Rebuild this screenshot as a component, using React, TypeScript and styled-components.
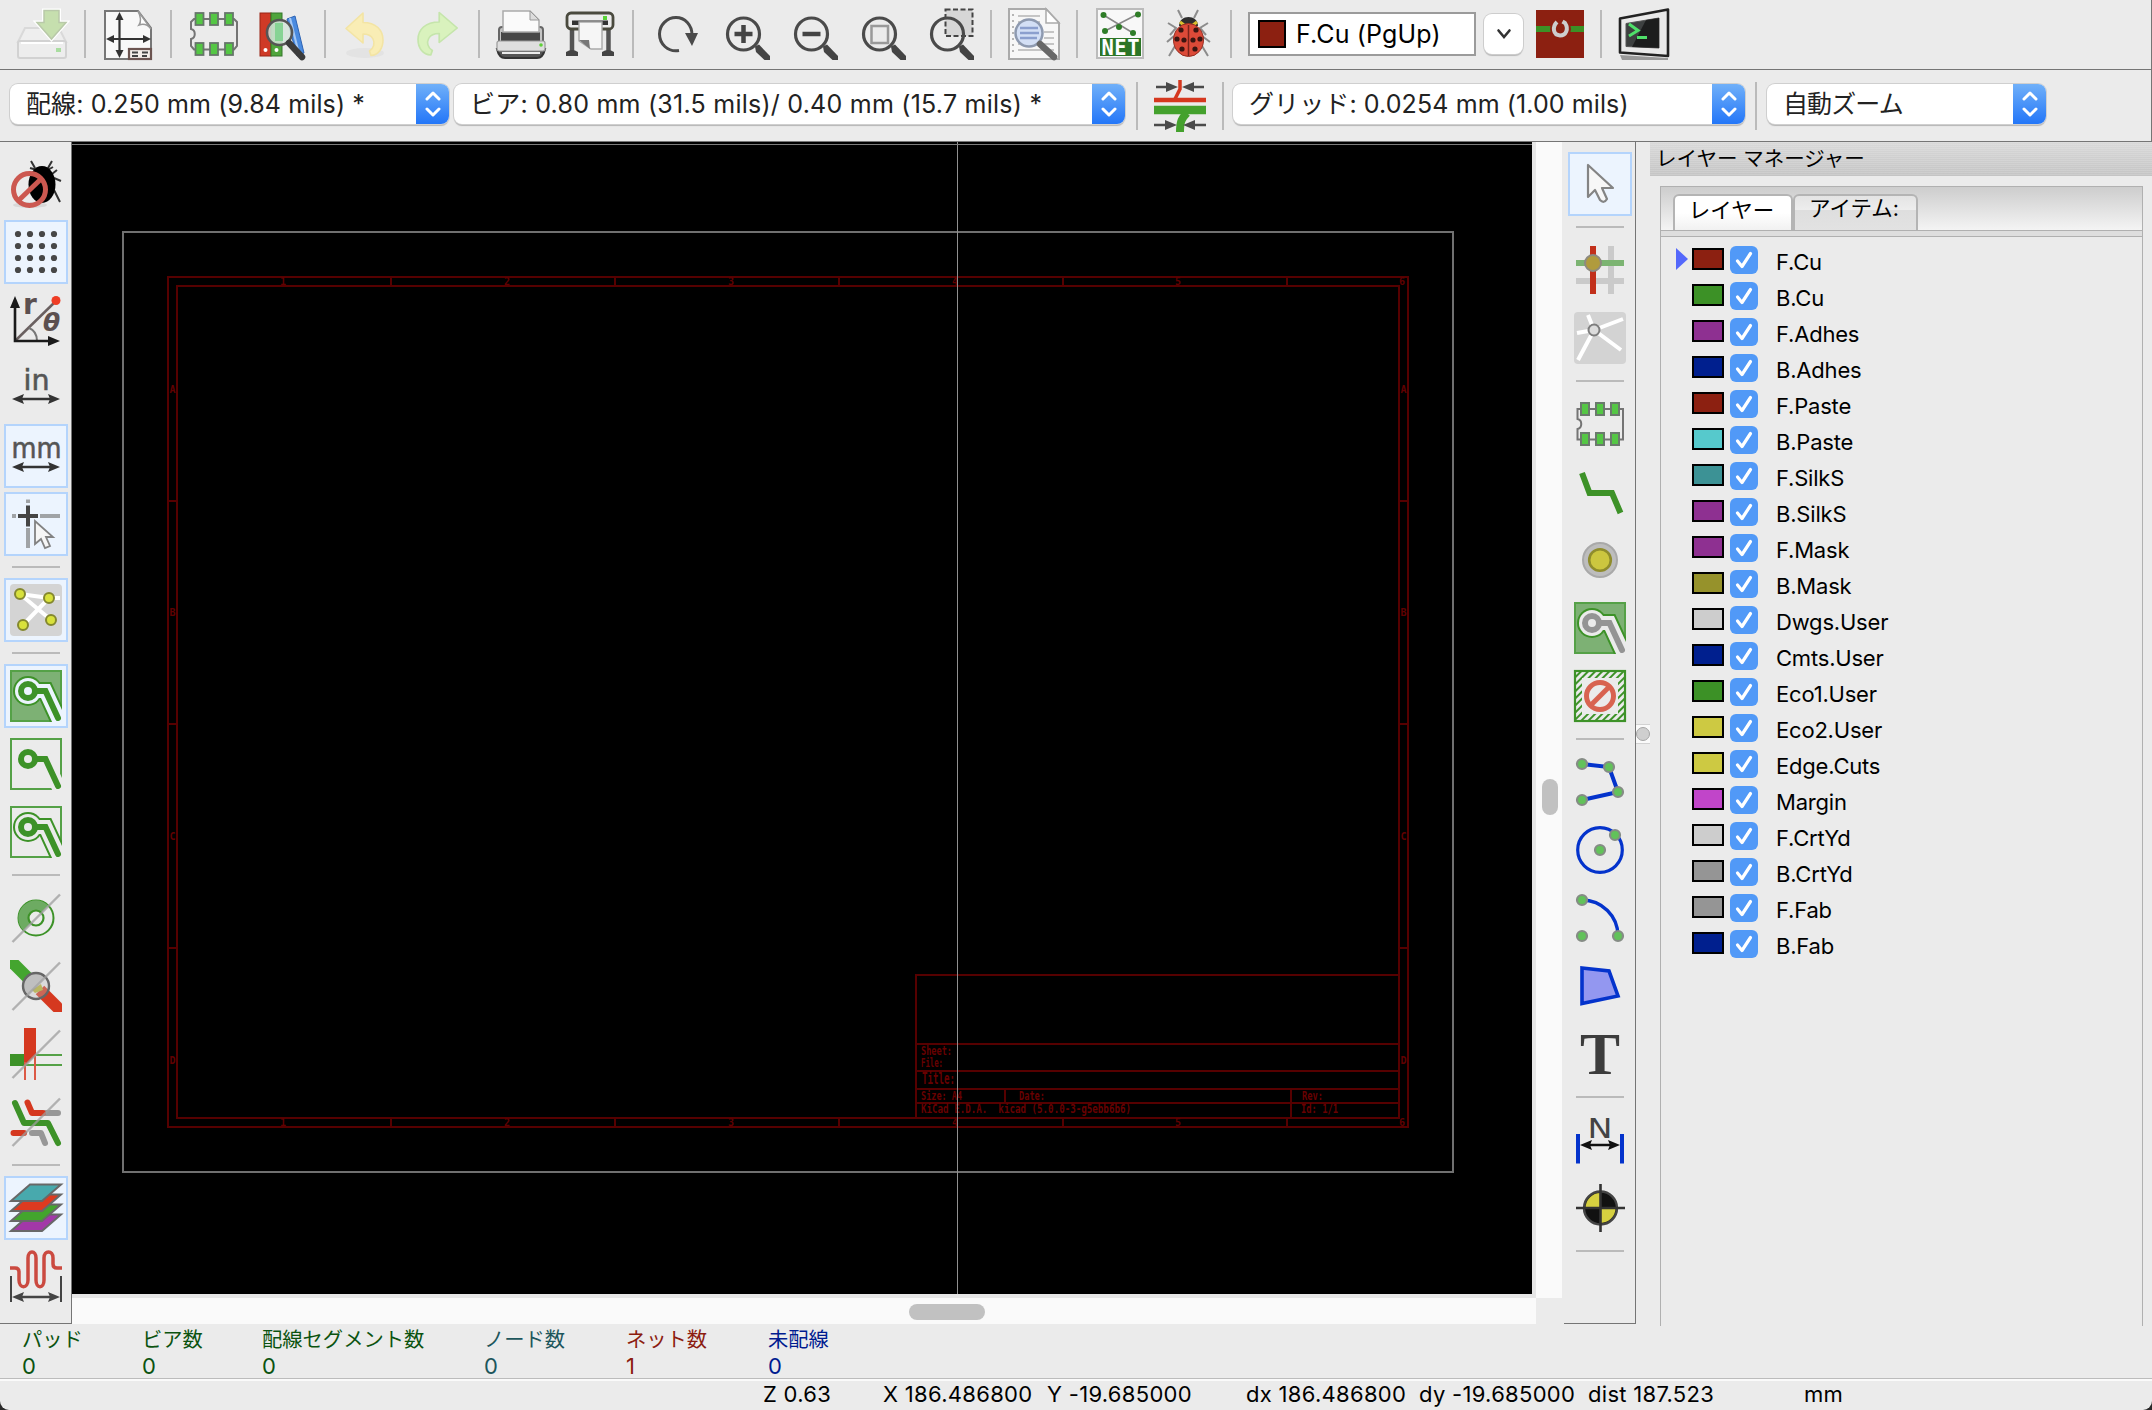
import React, { ReactNode } from "react";
import styled, { createGlobalStyle, css } from "styled-components";

const GlobalStyle = createGlobalStyle`
  html, body { margin: 0; padding: 0; background: #2a2a2a; overflow: hidden; }
  * { box-sizing: border-box; }
`;

const SANS = `Inter, "Noto Sans CJK JP", sans-serif`;
const GREEN = "#3d9228";
const RED = "#d5381f";
const DARK = "#4a4a4a";
const BLUE = "#0433cc";

/* ---------- layout ---------- */

const Window = styled.div`
  display: flex;
  flex-direction: column;
  width: 2152px;
  height: 1410px;
  background: #ebebeb;
  border-bottom-left-radius: 9px;
  border-bottom-right-radius: 9px;
  overflow: hidden;
  font-family: ${SANS};
  color: #000;
`;

const TopBar = styled.div<{ $height: number; $gap: number; $pad: number; $lift: number }>`
  display: flex;
  align-items: center;
  gap: ${(p) => p.$gap}px;
  height: ${(p) => p.$height}px;
  padding: 0 0 ${(p) => p.$lift}px ${(p) => p.$pad}px;
  border-bottom: 1px solid #757575;
  border-right: 1px solid #757575;
`;

const Group = styled.div<{ $gap: number; $left?: number }>`
  display: flex;
  align-items: center;
  gap: ${(p) => p.$gap}px;
  margin-left: ${(p) => p.$left ?? 0}px;
`;

const VRule = styled.div`
  width: 2px;
  height: 48px;
  flex: none;
  background: #bababa;
`;

const HRule = styled.div`
  width: 48px;
  height: 2px;
  flex: none;
  margin: 6px 0;
  background: #bababa;
`;

const Middle = styled.div`
  display: flex;
  height: 1182px;
`;

const SideBar = styled.div`
  display: flex;
  flex-direction: column;
  align-items: center;
  gap: 4px;
  width: 72px;
  padding-top: 10px;
  border-right: 1px solid #757575;
  border-bottom: 1px solid #757575;
  flex: none;
`;

const ToolButton = styled.div<{ $on?: boolean }>`
  display: flex;
  align-items: center;
  justify-content: center;
  width: 64px;
  height: 64px;
  flex: none;
  border: 2px solid transparent;
  ${(p) =>
    p.$on &&
    css`
      background: #ecf4fe;
      border-color: #b4d4fc;
    `}
`;

const Art = styled.svg<{ $clip?: boolean }>`
  display: block;
  width: 52px;
  height: 52px;
  flex: none;
  overflow: ${(p) => (p.$clip ? "hidden" : "visible")};
`;

/* ---------- controls ---------- */

const SelectBox = styled.div<{ $width: number }>`
  display: flex;
  width: ${(p) => p.$width}px;
  height: 40px;
  margin-bottom: 3px;
  flex: none;
  border-radius: 8px;
  background: #fff;
  overflow: hidden;
  box-shadow: 0 0 0 1px #cfcfcf, 0 2px 1px #b5b5b5;
`;

const SelectText = styled.span<{ $ls: number }>`
  flex: 1;
  padding-left: 16px;
  font-size: 25px;
  line-height: 40px;
  letter-spacing: ${(p) => p.$ls}px;
  color: #222;
  white-space: pre;
`;

const Stepper = styled.div`
  display: flex;
  align-items: center;
  justify-content: center;
  width: 33px;
  background: linear-gradient(#70b0f9, #2376f8);
`;

const ColorCombo = styled.div`
  display: flex;
  align-items: center;
  gap: 10px;
  width: 228px;
  height: 44px;
  padding-left: 8px;
  background: #fff;
  border: 2px solid #9b9b9b;
  font-size: 25px;
  letter-spacing: 0.15px;
  white-space: pre;
`;

const ComboSwatch = styled.div`
  width: 28px;
  height: 28px;
  border: 2px solid #000;
  background: #8c2011;
`;

const DropButton = styled.div`
  display: flex;
  align-items: center;
  justify-content: center;
  width: 39px;
  height: 40px;
  margin-bottom: 1px;
  background: #fff;
  border-radius: 8px;
  box-shadow: 0 0 0 1px #cdcdcd, 0 2px 1px #b8b8b8;
`;

const LayerPair = styled.svg`
  width: 48px;
  height: 48px;
  margin-left: 5px;
  background: #8c2011;
`;

/* ---------- canvas ---------- */

const Board = styled.div`
  display: grid;
  grid-template-columns: 1460px 4px 26px;
  grid-template-rows: 1152px 4px 26px;
  width: 1492px;
  flex: none;
`;

const Drawing = styled.svg`
  display: block;
  width: 1460px;
  height: 1152px;
  background: #000;
`;

const Gutter = styled.div`
  background: #e6e6e6;
`;

const VTrack = styled.div`
  display: flex;
  justify-content: center;
  grid-row: span 2;
  padding: 637px 0 0 2px;
  background: #fafafa;
`;

const HTrack = styled.div`
  grid-column: span 2;
  padding: 6px 0 0 837px;
  background: #fafafa;
`;

const HGutter = styled(Gutter)`
  grid-column: span 2;
`;

const Thumb = styled.div<{ $w: number; $h: number }>`
  width: ${(p) => p.$w}px;
  height: ${(p) => p.$h}px;
  border-radius: 8px;
  background: #c1c1c1;
`;

/* ---------- layer manager ---------- */

const Sash = styled.div`
  width: 14px;
  padding-top: 582px;
  flex: none;
`;

const SashGrip = styled.div`
  display: flex;
  align-items: center;
  justify-content: center;
  height: 20px;
  background: #fafafa;
  border: solid #d2d2d2;
  border-width: 1px 0;
  &::before {
    content: "";
    width: 12px;
    height: 12px;
    border-radius: 50%;
    background: #cfcfcf;
    border: 1px solid #a5a5a5;
  }
`;

const Panel = styled.div`
  display: flex;
  flex-direction: column;
  flex: 1;
`;

const PanelTitle = styled.div`
  height: 34px;
  flex: none;
  padding-left: 6px;
  background: repeating-linear-gradient(rgba(255, 255, 255, 0.14) 0 1px, transparent 1px 2px),
    linear-gradient(#d9d9d9, #c4c4c4);
  font-size: 20.5px;
  line-height: 33px;
  white-space: pre;
`;

const Notebook = styled.div`
  width: 483px;
  height: 1140px;
  flex: none;
  margin: 10px 0 0 10px;
  border: solid #b0b0b0;
  border-width: 1px 1px 0;
`;

const TabStrip = styled.div`
  display: flex;
  align-items: flex-end;
  height: 44px;
  padding-left: 12px;
  background: linear-gradient(#cdcdcd, #f4f4f4);
  border-bottom: 1px solid #b0b0b0;
`;

const Tab = styled.div<{ $active?: boolean; $width: number }>`
  width: ${(p) => p.$width}px;
  height: 36px;
  padding-right: 3px;
  text-align: center;
  border: 2px solid #b4b4b4;
  border-bottom: 0;
  border-radius: 6px 6px 0 0;
  font-size: 21.5px;
  line-height: ${(p) => (p.$active ? 28 : 24)}px;
  background: ${(p) =>
    p.$active
      ? "linear-gradient(#fff 50%, #f1f1f1)"
      : "linear-gradient(#e4e4e4, #ededed 40%, #dedede 42%, #e2e2e2)"};
`;

const StripEdge = styled.div`
  height: 6px;
  background: #dedede;
  border-bottom: 1px solid #b0b0b0;
`;

const LayerList = styled.div`
  padding: 9px 0 0 15px;
`;

const LayerRow = styled.div`
  display: flex;
  height: 36px;
`;

const Marker = styled.div<{ $on: boolean }>`
  width: 12px;
  height: 22px;
  margin: 2px 4px 0 0;
  background: ${(p) => (p.$on ? "#5468fb" : "transparent")};
  clip-path: polygon(0 0, 100% 50%, 0 100%);
`;

const Swatch = styled.div<{ $color: string }>`
  width: 32px;
  height: 22px;
  margin: 2px 6px 0 0;
  border: 2px solid #000;
  background: ${(p) => p.$color};
`;

const Check = styled.svg`
  width: 28px;
  height: 28px;
  border-radius: 6px;
  background: #5199f7;
`;

const LayerName = styled.span`
  margin-left: 18px;
  font-size: 22px;
  line-height: 32px;
  letter-spacing: -0.2px;
`;

/* ---------- bottom ---------- */

const InfoBar = styled.div`
  display: flex;
  height: 55px;
  padding-left: 22px;
  border-bottom: 1px solid #bcbcbc;
`;

const InfoCell = styled.div<{ $width: number; $color: string }>`
  display: flex;
  flex-direction: column;
  width: ${(p) => p.$width}px;
  color: ${(p) => p.$color};
  font-size: 20.3px;
  line-height: 28px;
  padding-top: 2px;
  white-space: nowrap;
`;

const InfoValue = styled.span`
  font-size: 22px;
  line-height: 25px;
`;

const StatusBar = styled.div`
  display: flex;
  height: 31px;
  padding-left: 763px;
  border-top: 2px solid #fafafa;
  font-size: 22px;
  line-height: 27px;
`;

const StatusCell = styled.span<{ $width: number }>`
  width: ${(p) => p.$width}px;
  flex: none;
  letter-spacing: 0.3px;
  white-space: nowrap;
`;

/* ---------- icon building blocks ---------- */

const Icon = ({ children, clip }: { children: ReactNode; clip?: boolean }) => (
  <Art viewBox="0 0 52 52" fill="none" $clip={clip}>
    {children}
  </Art>
);

const DoubleArrow = ({ x1, x2, y, color = "#333" }: { x1: number; x2: number; y: number; color?: string }) => (
  <g>
    <path d={`M${x1 + 6} ${y}H${x2 - 6}`} stroke={color} strokeWidth="2.5" />
    <path
      d={`M${x1} ${y}l12 -5l-2 5l2 5zM${x2} ${y}l-12 -5l2 5l-2 5z`}
      fill={color}
    />
  </g>
);

const Slash = () => <path d="M2.5 50L50 2.5" stroke="#9d9d9d" strokeOpacity=".75" strokeWidth="2.4" />;

const Node = ({ x, y }: { x: number; y: number }) => (
  <circle cx={x} cy={y} r="5" fill="#62c25a" stroke="#858c85" strokeWidth="2.2" />
);

const Lens = ({ children }: { children?: ReactNode }) => (
  <g>
    <path d="M37 38.5L41 36.5L52 48V52H46.500L38 44z" fill="#444" />
    <circle cx="25.500" cy="26" r="16" stroke="#4a4a4a" strokeWidth="3.200" />
    {children}
  </g>
);

/* ---------- top toolbar icons ---------- */

const SaveIcon = () => (
  <Icon>
    <path d="M9 20H43L50 34H2Z" fill="#eee" stroke="#d9d9d9" strokeWidth="2" />
    <rect x="2" y="33" width="48" height="17" rx="2" fill="#ededed" stroke="#d2d2d2" strokeWidth="2" />
    <path d="M5 35H47" stroke="#fff" strokeWidth="2" />
    <rect x="40" y="40" width="5" height="4" fill="#a9dda0" />
    <path d="M28 2.500H43V14.500H50L35.500 31L21 14.500H28Z" fill="#c6dfae" stroke="#fff" strokeWidth="4" />
    <path d="M28 2.500H43V14.500H50L35.500 31L21 14.500H28Z" fill="#c6dfae" stroke="#b9c9a9" strokeWidth="1.500" />
  </Icon>
);

const PageIcon = () => (
  <Icon>
    <path d="M3 3H36L49 20V51H3Z" fill="#f8f8f8" stroke="#777" strokeWidth="2" />
    <path d="M36 3C39 9 39 14 37 17C42 15 46 17 49 21Z" fill="#fff" stroke="#999" strokeWidth="1.500" />
    <path d="M17.500 8V46M8 31H45" stroke="#333" strokeWidth="2.200" />
    <path d="M17.500 4l4 8h-8zM17.500 50l4 -8h-8zM4 31l8 -4v8zM49 31l-8 -4v8z" fill="#333" />
    <rect x="27" y="41" width="22" height="10" fill="#f4eee9" stroke="#6b5450" strokeWidth="2.200" />
    <path d="M30 44.500h6M40 44.500h6M30 48h6M40 48h5" stroke="#444" strokeWidth="1.800" />
  </Icon>
);

const FootprintIcon = () => (
  <Icon>
    <path d="M8 11H46L49 14V38L46 41.500H6L3 38V31C8 30 8 22 3 21V14L6 11Z" stroke="#747474" strokeWidth="2" />
    {[11.5, 26, 41].map((x) =>
      [11, 41].map((y) => (
        <rect key={`${x}-${y}`} x={x - 4} y={y - 6} width="8" height="12" fill="#54c744" stroke="#66766a" strokeWidth="1.800" />
      ))
    )}
  </Icon>
);

const LibraryIcon = () => (
  <Icon>
    <rect x="4" y="5" width="11" height="43" fill="#cf3a26" stroke="#9a2414" />
    <rect x="15" y="5" width="11" height="43" fill="#4fa53c" stroke="#35762a" />
    <path d="M31 11L39 8L48 45L41 48Z" fill="#4a8be0" stroke="#2d63b4" />
    <path d="M34 10L43 46" stroke="#a5c9f5" strokeWidth="2" />
    <circle cx="9.500" cy="42" r="2" fill="#fff" />
    <circle cx="20.500" cy="42" r="2" fill="#fff" />
    <circle cx="23.500" cy="24.500" r="12.500" fill="#d5e4da" fillOpacity=".85" stroke="#555" strokeWidth="2.600" />
    <rect x="19" y="15" width="8" height="18" fill="#86d394" />
    <path d="M33 35L46 49" stroke="#3c3c3c" strokeWidth="6.500" strokeLinecap="round" />
  </Icon>
);

const UndoShape = ({ fill, edge }: { fill: string; edge: string }) => (
  <path
    d="M4 20.500L21 5V14.500C34 14.500 41 22 41 32C41 41 36 47 29 47.500L27.500 43C32 40 33 35 31 31C29 27 25 26 21 26V35Z"
    fill={fill}
    stroke={edge}
    strokeWidth="1.600"
    strokeLinejoin="round"
  />
);

const UndoIcon = () => (
  <Icon>
    <ellipse cx="23" cy="45" rx="19" ry="5" fill="#e3e3e3" />
    <UndoShape fill="#f9edb5" edge="#f3e4a4" />
  </Icon>
);

const RedoIcon = () => (
  <Icon>
    <g transform="translate(51.500 -0.500) scale(-1.060 1)">
      <UndoShape fill="#d9f2bd" edge="#c5e5ab" />
    </g>
  </Icon>
);

const PrintIcon = () => (
  <Icon>
    <path d="M1 41Q3 50 9 50H41Q47 50 49 41Z" fill="#555" stroke="#333" strokeWidth="2" />
    <path d="M6 45H44" stroke="#ececec" strokeWidth="2" />
    <rect x="3" y="19" width="44" height="18" rx="3" fill="#c5c5c5" stroke="#666" strokeWidth="2" />
    <rect x="5" y="24" width="39" height="11" fill="#474747" />
    <path d="M7 3H34L43 12V24H7Z" fill="#fafafa" stroke="#aaa" strokeWidth="1.500" />
    <path d="M34 3V12H43Z" fill="#ddd" stroke="#999" />
    <rect x="1" y="33" width="48" height="10" rx="2" fill="#dedede" stroke="#999" strokeWidth="1.200" />
    <circle cx="45" cy="37" r="1.800" fill="#5fd038" />
  </Icon>
);

const PlotIcon = () => (
  <Icon>
    <path d="M8 20V44M44.500 20V44" stroke="#555" strokeWidth="4.500" />
    <path d="M2 48V44Q8 40 14 44V48ZM38 48V44Q44 40 50 44V48Z" fill="#444" />
    <rect x="3" y="5" width="46" height="16" rx="4" fill="#ececec" stroke="#4a4a3e" strokeWidth="2.800" />
    <rect x="8" y="12.500" width="36" height="4.500" fill="#333" />
    <path d="M15 14H38V41H27L15 33Z" fill="#f6f6f6" stroke="#aaa" strokeWidth="1.400" />
    <path d="M15 32H25L26 41Z" fill="#777" />
    <rect x="39" y="8" width="4" height="4" fill="#58d236" />
  </Icon>
);

const RefreshIcon = () => (
  <Icon>
    <path d="M29 42.500C18 44.500 9.500 36 9.500 26C9.500 17 17 9.500 26 9.500C35 9.500 42 17 42 27" stroke={DARK} strokeWidth="3" />
    <path d="M35 25H48L42 38Z" fill={DARK} />
  </Icon>
);

const ZoomInIcon = () => (
  <Icon>
    <Lens>
      <path d="M25.500 17V35M16.500 26H34.500" stroke="#444" strokeWidth="4.500" />
    </Lens>
  </Icon>
);

const ZoomOutIcon = () => (
  <Icon>
    <Lens>
      <path d="M16.500 26H34.500" stroke="#444" strokeWidth="4.500" />
    </Lens>
  </Icon>
);

const ZoomFitIcon = () => (
  <Icon>
    <Lens>
      <rect x="17.500" y="18" width="16.500" height="17" stroke="#999" strokeWidth="2.500" />
    </Lens>
  </Icon>
);

const ZoomAreaIcon = () => (
  <Icon>
    <rect x="23.500" y="1.500" width="27" height="26.500" fill="#d6d6d6" stroke="#444" strokeWidth="2" strokeDasharray="5 2.500" />
    <Lens />
  </Icon>
);

const FindIcon = () => (
  <Icon>
    <path d="M1 1H38L51 15V51H1Z" fill="#f7f7f7" stroke="#aaa" strokeWidth="2" />
    <path d="M38 1V15H51Z" fill="#fff" stroke="#aaa" strokeWidth="1.500" />
    <path d="M10 8H32M10 14H32M36 24H46M36 30H46M10 36H46M10 42H46" stroke="#c5c5c5" strokeWidth="2" />
    <path d="M5 6V48" stroke="#b5b5b5" strokeWidth="2" strokeDasharray="2 4" />
    <circle cx="21" cy="25" r="13.500" fill="#d3dff5" stroke="#8e9ab0" strokeWidth="2.500" />
    <path d="M12 20H30M12 25H31M12 30H29" stroke="#8b9fce" strokeWidth="2.500" />
    <path d="M32 36L46 49" stroke="#686868" strokeWidth="6.500" strokeLinecap="round" />
  </Icon>
);

const NetIcon = () => (
  <Icon>
    <rect x="3" y="1" width="46" height="49" fill="#f8f8f8" stroke="#bbb" strokeWidth="2" />
    <path d="M9.500 7L39 25M44 6L11 23" stroke="#888" strokeWidth="1.500" />
    {[[9.5, 7], [44, 6.5], [25, 19], [11, 23], [39, 25]].map(([x, y]) => (
      <circle key={x} cx={x} cy={y} r="3" fill="#2f7d28" />
    ))}
    <rect x="6" y="30" width="41" height="18" fill="#2c7526" />
    <text x="26.500" y="46.500" fill="#fff" fontFamily="DejaVu Sans Mono" fontWeight="700" fontSize="20.500" textAnchor="middle" textLength="38">
      NET
    </text>
  </Icon>
);

const BugIcon = () => (
  <Icon>
    <path d="M16 2L20 10M36 2L32 10M6 15L14 20L8 27M46 15L38 20L44 27M12 28L5 34M40 28L48 34M13 38L7 48M40 38L46 48" stroke="#8c8c8c" strokeWidth="2" />
    <path d="M17 18C17 6 36 6 36 18Z" fill="#2d2d2d" />
    <path d="M18 14l4 3M35 14l-4 3" stroke="#d9c02e" strokeWidth="3" />
    <ellipse cx="26.500" cy="32" rx="15" ry="16.500" fill="#dc4a38" stroke="#952e22" />
    <path d="M26.500 17V48" stroke="#7a231b" strokeWidth="1.500" />
    {[[19, 22], [34, 22], [15, 31], [22, 32], [31, 32], [38, 31], [20, 41], [33, 41]].map(([x, y]) => (
      <circle key={`${x}-${y}`} cx={x} cy={y} r="2.600" fill="#3a1511" />
    ))}
  </Icon>
);

const TerminalIcon = () => (
  <Icon>
    <path d="M2 47L50 50V52H4Z" fill="#999" />
    <path d="M2 10.500L50 1.500V48L2 44.500Z" fill="#e9e9e9" stroke="#222" strokeWidth="2.600" strokeLinejoin="round" />
    <path d="M8 15.500L41 10V40L8 38.500Z" fill="#3d4040" stroke="#555" />
    <path d="M28 12L41 10V40L14 39Z" fill="#111" fillOpacity=".75" />
    <path d="M11 16L20 22.500L11 28" stroke="#4fe06a" strokeWidth="3" />
    <path d="M19 29.500H29" stroke="#4fe06a" strokeWidth="3" />
  </Icon>
);

const TrackWidthIcon = () => (
  <Icon>
    <path d="M26 0V9L21 19" stroke={RED} strokeWidth="3.500" />
    <path d="M0 20H52" stroke={RED} strokeWidth="4.500" />
    <path d="M0 30H52" stroke="#44a12d" strokeWidth="8.500" />
    <path d="M33 33C28 38 26 41 26 52" stroke="#44a12d" strokeWidth="8" />
    <path d="M2 7H14M38 7H50M0 45H14M38 45H52" stroke={DARK} strokeWidth="2.500" />
    <path d="M12 2l12 5l-12 5zM40 2l-12 5l12 5zM11 40l12 5l-12 5zM41 40l-12 5l12 5z" fill={DARK} />
  </Icon>
);

/* ---------- left toolbar icons ---------- */

const DrcOffIcon = () => (
  <Icon>
    <path d="M21 3L25 10M42 3L38 10M20 10L27 12M43 9L36 13M44 20L51 23M44 32L50 44M42 16L47 12" stroke="#333" strokeWidth="2" />
    <ellipse cx="32" cy="26.500" rx="13.500" ry="18.500" fill="#000" />
    <ellipse cx="20" cy="47" rx="17" ry="3" fill="#d8d8d8" />
    <circle cx="19.500" cy="31.500" r="16" stroke="#cc5850" strokeWidth="5" />
    <path d="M9 42L31 21" stroke="#cc5850" strokeWidth="5" />
  </Icon>
);

const GridIcon = () => (
  <Icon>
    {[8, 20, 32, 44].map((x) =>
      [8, 20, 32, 44].map((y) => <circle key={`${x}-${y}`} cx={x} cy={y} r="3.100" fill="#474747" />)
    )}
  </Icon>
);

const PolarIcon = () => (
  <Icon>
    <path d="M5 47L46 7" stroke="#6a6060" strokeWidth="2.500" />
    <path d="M19 34C24 36 27 41 27 47" stroke="#777" strokeWidth="2" />
    <path d="M5 10V47H42" stroke="#1a1a1a" strokeWidth="2.600" />
    <path d="M5 2l5 12h-10zM50 47l-12 -5v10z" fill="#1a1a1a" />
    <circle cx="46" cy="6.500" r="4.500" fill="#ef3d25" />
    <text x="13" y="20" fill="#5c5050" fontFamily="DejaVu Sans" fontWeight="700" fontSize="28">
      r
    </text>
    <text x="33" y="37" fill="#5c5050" fontFamily="DejaVu Sans" fontStyle="italic" fontWeight="700" fontSize="25">
      θ
    </text>
  </Icon>
);

const UnitIcon = ({ label, width }: { label: string; width: number }) => (
  <Icon>
    <text x="26.500" y="27.500" fill="#555" stroke="#555" strokeWidth=".6" fontFamily="DejaVu Sans" fontSize="28.500" textAnchor="middle" textLength={width} lengthAdjust="spacingAndGlyphs">
      {label}
    </text>
    <DoubleArrow x1={2} x2={50} y={37} />
  </Icon>
);

const CrosshairIcon = () => (
  <Icon>
    <path d="M18 1.500V5M18 30V50M2 18H6M30 18H50" stroke="#a0a3a6" strokeWidth="4" />
    <path d="M18 7.500V28.500M8 18H28" stroke="#454545" strokeWidth="4" />
    <path d="M25 23V46L31 41L35 50L40 48L36 39H43Z" fill="#f6f6f6" stroke="#828282" strokeWidth="1.800" />
  </Icon>
);

const RatsnestIcon = () => (
  <Icon>
    <rect width="52" height="52" rx="4" fill="#d4d4d4" />
    <path d="M10 10L39 14H50M10 10L41 36M13 41L39 14" stroke="#fff" strokeWidth="4" />
    {[[10, 10], [39, 14], [41, 36], [13, 41]].map(([x, y]) => (
      <circle key={x} cx={x} cy={y} r="5" fill="#d8e13c" stroke="#84882e" strokeWidth="2" />
    ))}
  </Icon>
);

const TRACE = "M18 21H35.500L48 48";
const TRACE_OUT = "M18 21H35.500L54 61";

const ZoneIcon = ({ fill, gap, outline, trace = GREEN }: { fill: string; gap: string; outline: boolean; trace?: string }) => (
  <Icon clip>
    <rect x="1" y="1" width="50" height="50" fill={fill} stroke="#55a147" strokeWidth="2" />
    {outline && (
      <g>
        <path d={TRACE_OUT} stroke={GREEN} strokeWidth="18" />
        <circle cx="18" cy="21" r="15" fill={GREEN} />
      </g>
    )}
    <path d={TRACE_OUT} stroke={gap} strokeWidth="14" />
    <circle cx="18" cy="21" r="13" fill={gap} />
    <path d={TRACE} stroke={trace} strokeWidth="6" strokeLinecap="round" />
    <circle cx="18" cy="21" r="7" fill={gap} stroke={trace} strokeWidth="6" />
  </Icon>
);

const PadSketchIcon = () => (
  <Icon>
    <circle cx="26" cy="26" r="17.500" stroke={GREEN} strokeWidth="2" />
    <path d="M13.500 38.500A17.500 17.500 0 0 1 38.500 13.500Z" fill="#6dab62" />
    <circle cx="26" cy="26" r="7.500" fill="#ebebeb" stroke={GREEN} strokeWidth="2.200" />
    <Slash />
  </Icon>
);

const ViaSketchIcon = () => (
  <Icon clip>
    <path d="M30 30L54 54" stroke={RED} strokeWidth="12" />
    <path d="M-2 -2L18 18" stroke="#44a52f" strokeWidth="12" />
    <path d="M16.500 35.500A13.500 13.500 0 0 1 35.500 16.500Z" fill="#c1c1c1" />
    <path d="M22 30L31 24L33 30L25 33Z" fill="#b8b42f" />
    <circle cx="26" cy="26" r="13" fill="#bdbdbd" fillOpacity=".35" stroke="#666" strokeWidth="2.400" />
    <Slash />
  </Icon>
);

const TrackSketchIcon = () => (
  <Icon>
    <rect x="0" y="26" width="15" height="12" fill={GREEN} />
    <path d="M14 0H26V27L14 38Z" fill={RED} />
    <path d="M26 27H52M16 37H52" stroke="#55a147" strokeWidth="2" />
    <path d="M15 34V52M25 28V52" stroke="#dc5a46" strokeWidth="2" />
    <Slash />
  </Icon>
);

const ContrastIcon = () => (
  <Icon>
    <g strokeWidth="6" strokeLinecap="round" strokeLinejoin="round">
      <path d="M36 17H48M22 37H31L35 47" stroke="#979797" />
      <path d="M17.500 6.500L22 17H33M3.500 37H14" stroke={RED} />
      <path d="M5 7L14 27H38L48 47" stroke={GREEN} />
    </g>
    <Slash />
  </Icon>
);

const LayersIcon = () => (
  <Icon>
    {["#a238a8", "#43a52d", "#dd3a20", "#48a9ad"].map((c, i) => (
      <path key={c} d={`M20 ${32.5 - i * 10}H51L32 ${49 - i * 10}H1Z`} fill={c} stroke="#686868" strokeWidth="2" />
    ))}
  </Icon>
);

const TuneIcon = () => (
  <Icon>
    <path
      d="M0 18H5Q9 18 9 22V30C9 39 18 39 18 30V8C18 0 26 0 26 8V30C26 39 34 39 34 30V8C34 0 43 0 43 8V14Q43 18 47 18H52"
      stroke="#cb4a40"
      strokeWidth="3.500"
    />
    <path d="M1 26V52M51 26V52" stroke="#444" strokeWidth="2" />
    <DoubleArrow x1={2} x2={50} y={47} color="#444" />
  </Icon>
);

/* ---------- right toolbar icons ---------- */

const CursorIcon = () => (
  <Icon>
    <path d="M14 7V39L21 32L26 42Q30 46 33 41L28 30H39Z" fill="#f7f7f7" stroke="#848484" strokeWidth="2.200" strokeLinejoin="round" />
  </Icon>
);

const HighlightIcon = () => (
  <Icon>
    <path d="M37 2V50M2 37H50" stroke="#cacaca" strokeWidth="6" />
    <path d="M2 19H50" stroke="#7cb472" strokeWidth="6" />
    <path d="M19 2V50" stroke="#c2301b" strokeWidth="6" />
    <circle cx="19" cy="19" r="8" fill="#b09b3d" stroke="#8d8a80" strokeWidth="2" />
  </Icon>
);

const LocalRatsIcon = () => (
  <Icon>
    <rect width="52" height="52" rx="4" fill="#d3d3d3" />
    <path d="M14 3L20 18L49 7M47 38L20 18L4 48M3 21L20 18" stroke="#fff" strokeWidth="4" />
    <circle cx="20" cy="18" r="5.500" fill="#dcdcdc" stroke="#7d7d7d" strokeWidth="2" />
  </Icon>
);

const AddFootprintIcon = () => (
  <Icon>
    <path d="M3.500 11H49V41.500H3.500V31C8.500 30 8.500 22 3.500 21Z" stroke="#747474" strokeWidth="2" />
    {[11, 26, 41].map((x) =>
      [11, 41].map((y) => (
        <rect key={`${x}-${y}`} x={x - 4} y={y - 6} width="8" height="12" fill="#54c744" stroke="#6a7a6c" strokeWidth="2" />
      ))
    )}
  </Icon>
);

const TrackIcon = () => (
  <Icon>
    <path d="M8 7L15.500 27H38L46.500 47" stroke={GREEN} strokeWidth="6" />
  </Icon>
);

const ViaIcon = () => (
  <Icon>
    <circle cx="26" cy="26" r="17" fill="#bdbdbd" stroke="#a9a9a9" strokeWidth="2" />
    <circle cx="26" cy="26" r="10.800" fill="#ccc63f" stroke="#8f8c2c" strokeWidth="2.600" />
  </Icon>
);

const KeepoutIcon = () => (
  <Icon>
    <defs>
      <pattern id="hatch" width="5" height="5" patternUnits="userSpaceOnUse" patternTransform="rotate(45)">
        <path d="M1 0V5" stroke={GREEN} strokeWidth="2" />
      </pattern>
    </defs>
    <rect x="1" y="1" width="50" height="50" fill="url(#hatch)" stroke={GREEN} strokeWidth="2.200" />
    <rect x="8" y="8" width="36" height="36" fill="#ebebeb" />
    <circle cx="26" cy="26" r="13.500" stroke="#d86350" strokeWidth="5" />
    <path d="M17 35L35 17" stroke="#d86350" strokeWidth="5" />
  </Icon>
);

const PolylineIcon = () => (
  <Icon>
    <path d="M8 8L35 11L44 36L8 44" stroke={BLUE} strokeWidth="4" />
    <Node x={8} y={8} />
    <Node x={35} y={11} />
    <Node x={44} y={36} />
    <Node x={8} y={44} />
  </Icon>
);

const CircleIcon = () => (
  <Icon>
    <circle cx="26" cy="26" r="22.300" stroke={BLUE} strokeWidth="3.200" />
    <Node x={26} y={26} />
    <Node x={41} y={11} />
  </Icon>
);

const ArcIcon = () => (
  <Icon>
    <path d="M8 8A36 36 0 0 1 44 44" stroke={BLUE} strokeWidth="3.400" />
    <Node x={8} y={8} />
    <Node x={8} y={44} />
    <Node x={44} y={44} />
  </Icon>
);

const PolygonIcon = () => (
  <Icon>
    <path d="M8 8L35 11L44 36L8 43.500Z" fill="#9397f0" stroke={BLUE} strokeWidth="3.600" />
  </Icon>
);

const TextIcon = () => (
  <Icon>
    <text x="26" y="46" fill="#3c3c3c" fontFamily="Liberation Serif" fontWeight="700" fontSize="60" textAnchor="middle">
      T
    </text>
  </Icon>
);

const DimensionIcon = () => (
  <Icon>
    <text x="13.500" y="23.500" fill="#444" fontFamily="DejaVu Sans" fontSize="26" textLength="25" lengthAdjust="spacingAndGlyphs">
      N
    </text>
    <path d="M4 20V49.500M48 20V49.500" stroke={BLUE} strokeWidth="4" />
    <DoubleArrow x1={6} x2={46} y={31} color="#111" />
  </Icon>
);

const TargetIcon = () => (
  <Icon>
    <circle cx="26.500" cy="26" r="16.500" fill="#111" stroke="#444" strokeWidth="2.400" />
    <path d="M26.500 26V11A15 15 0 0 0 11.500 26ZM26.500 26V41A15 15 0 0 0 41.500 26Z" fill="#d6d040" />
    <path d="M26.500 2V50M2 26H51" stroke="#333" strokeWidth="2.600" />
  </Icon>
);

/* ---------- composed parts ---------- */

const Select = ({ width, text, ls = 0 }: { width: number; text: string; ls?: number }) => (
  <SelectBox $width={width}>
    <SelectText $ls={ls}>{text}</SelectText>
    <Stepper>
      <svg width="16" height="28" viewBox="0 0 16 28" fill="none" stroke="#fff" strokeWidth="3" strokeLinecap="round" strokeLinejoin="round">
        <path d="M2 9L8 3L14 9M2 19L8 25L14 19" />
      </svg>
    </Stepper>
  </SelectBox>
);

type Tool = { icon: ReactNode; on?: boolean } | null;

const ToolColumn = ({ tools }: { tools: Tool[] }) => (
  <SideBar>
    {tools.map((t, i) => (t ? <ToolButton key={i} $on={t.on}>{t.icon}</ToolButton> : <HRule key={i} />))}
  </SideBar>
);

const leftTools: Tool[] = [
  { icon: <DrcOffIcon /> },
  { icon: <GridIcon />, on: true },
  { icon: <PolarIcon /> },
  { icon: <UnitIcon label="in" width={26} /> },
  { icon: <UnitIcon label="mm" width={50} />, on: true },
  { icon: <CrosshairIcon />, on: true },
  null,
  { icon: <RatsnestIcon />, on: true },
  null,
  { icon: <ZoneIcon fill="#7db174" gap="#ecf4fe" outline />, on: true },
  { icon: <ZoneIcon fill="none" gap="#ebebeb" outline={false} /> },
  { icon: <ZoneIcon fill="none" gap="#ebebeb" outline /> },
  null,
  { icon: <PadSketchIcon /> },
  { icon: <ViaSketchIcon /> },
  { icon: <TrackSketchIcon /> },
  { icon: <ContrastIcon /> },
  null,
  { icon: <LayersIcon />, on: true },
  { icon: <TuneIcon /> },
];

const rightTools: Tool[] = [
  { icon: <CursorIcon />, on: true },
  null,
  { icon: <HighlightIcon /> },
  { icon: <LocalRatsIcon /> },
  null,
  { icon: <AddFootprintIcon /> },
  { icon: <TrackIcon /> },
  { icon: <ViaIcon /> },
  { icon: <ZoneIcon fill="#7db174" gap="#ebebeb" outline trace="#949494" /> },
  { icon: <KeepoutIcon /> },
  null,
  { icon: <PolylineIcon /> },
  { icon: <CircleIcon /> },
  { icon: <ArcIcon /> },
  { icon: <PolygonIcon /> },
  { icon: <TextIcon /> },
  null,
  { icon: <DimensionIcon /> },
  { icon: <TargetIcon /> },
  null,
];

const layers: [string, string][] = [
  ["F.Cu", "#8c2011"],
  ["B.Cu", "#3c9126"],
  ["F.Adhes", "#8e3091"],
  ["B.Adhes", "#001f8e"],
  ["F.Paste", "#8c2011"],
  ["B.Paste", "#56c9cc"],
  ["F.SilkS", "#3c9295"],
  ["B.SilkS", "#8e3091"],
  ["F.Mask", "#8e3091"],
  ["B.Mask", "#96922b"],
  ["Dwgs.User", "#cdcdcd"],
  ["Cmts.User", "#001f8e"],
  ["Eco1.User", "#3c9126"],
  ["Eco2.User", "#cdc942"],
  ["Edge.Cuts", "#cdc942"],
  ["Margin", "#c145c9"],
  ["F.CrtYd", "#cdcdcd"],
  ["B.CrtYd", "#959595"],
  ["F.Fab", "#959595"],
  ["B.Fab", "#001f8e"],
];

const info: [string, string, number, string][] = [
  ["パッド", "0", 120, "#0b5310"],
  ["ビア数", "0", 120, "#0b5310"],
  ["配線セグメント数", "0", 222, "#0b5310"],
  ["ノード数", "0", 142, "#1d565c"],
  ["ネット数", "1", 142, "#8c1c10"],
  ["未配線", "0", 120, "#001b90"],
];

const status: [string, number][] = [
  ["Z 0.63", 120],
  ["X 186.486800", 164],
  ["Y -19.685000", 199],
  ["dx 186.486800", 173],
  ["dy -19.685000", 169],
  ["dist 187.523", 216],
  ["mm", 60],
];

/* Sheet frame coordinates are window pixels, shifted by the viewBox origin. */
const sheetText: [string, number, number, number, number][] = [
  ["Sheet:", 921, 1055, 31, 12],
  ["File:", 921, 1067, 22, 12],
  ["Title:", 922, 1084, 33, 15],
  ["Size: A4", 921, 1100, 41, 12],
  ["Date:", 1019, 1100, 26, 12],
  ["Rev:", 1302, 1100, 21, 12],
  ["KiCad E.D.A.  kicad (5.0.0-3-g5ebb6b6)", 921, 1113, 210, 12],
  ["Id: 1/1", 1301, 1113, 37, 12],
];

const BoardDrawing = () => (
  <Drawing viewBox="72 142 1460 1152" fill="none">
    <rect x="123" y="232" width="1330" height="940" stroke="#707070" strokeWidth="2" />
    <g stroke="#560000" strokeWidth="2">
      <rect x="168" y="277" width="1240" height="850" />
      <rect x="177" y="286" width="1222" height="832" />
      {[391, 615, 839, 1063, 1287].map((x) => (
        <path key={x} d={`M${x} 277V286M${x} 1118V1127`} />
      ))}
      {[501, 724, 948].map((y) => (
        <path key={y} d={`M168 ${y}H177M1399 ${y}H1408`} />
      ))}
      <path d="M916 1118V975H1399M916 1044H1399M916 1071H1399M916 1089H1399M916 1103H1399M1005 1089V1103M1291 1089V1118" />
    </g>
    <g fill="#600000" fontFamily="DejaVu Sans Mono" fontWeight="700" fontSize="10" textAnchor="middle">
      {[283, 507, 731, 955, 1178, 1402].map((x, i) => (
        <React.Fragment key={x}>
          <text x={x} y="285">{i + 1}</text>
          <text x={x} y="1126">{i + 1}</text>
        </React.Fragment>
      ))}
      {[389, 612, 836, 1060].map((y, i) => (
        <React.Fragment key={y}>
          <text x="172.500" y={y + 3.5}>{"ABCD"[i]}</text>
          <text x="1403.500" y={y + 3.5}>{"ABCD"[i]}</text>
        </React.Fragment>
      ))}
    </g>
    <g fill="#680000" fontFamily="DejaVu Sans Mono" fontWeight="700">
      {sheetText.map(([t, x, y, w, s]) => (
        <text key={t} x={x} y={y} textLength={w} lengthAdjust="spacingAndGlyphs" fontSize={s}>
          {t.replace("  ", "\u00a0\u00a0")}
        </text>
      ))}
    </g>
    <path d="M957.500 142V1294" stroke="#909090" />
    <path d="M72 144.500H1532" stroke="#7d7d7d" />
  </Drawing>
);

export default function App() {
  return (
    <>
      <GlobalStyle />
      <Window>
        <TopBar $height={70} $gap={16} $pad={16} $lift={1}>
          <SaveIcon />
          <VRule />
          <PageIcon />
          <VRule />
          <FootprintIcon />
          <LibraryIcon />
          <VRule />
          <UndoIcon />
          <RedoIcon />
          <VRule />
          <PrintIcon />
          <PlotIcon />
          <VRule />
          <RefreshIcon />
          <ZoomInIcon />
          <ZoomOutIcon />
          <ZoomFitIcon />
          <ZoomAreaIcon />
          <VRule />
          <FindIcon />
          <VRule />
          <NetIcon />
          <BugIcon />
          <VRule />
          <Group $gap={8}>
            <ColorCombo>
              <ComboSwatch />
              F.Cu (PgUp)
            </ColorCombo>
            <DropButton>
              <svg width="16" height="12" viewBox="0 0 16 12" fill="none" stroke="#333" strokeWidth="2.600" strokeLinecap="round">
                <path d="M2.500 2.500L8 9L13.500 2.500" />
              </svg>
            </DropButton>
            <LayerPair viewBox="0 0 48 48" fill="none">
              <path d="M0 19H48" stroke="#3c9126" strokeWidth="6" />
              <circle cx="24.500" cy="19" r="10.500" fill="#8c2011" />
              <path d="M21 12C16 17 17 25 24 25.500C30 25.500 33 19 29 13L26.500 11.500" stroke="#cdcdcd" strokeWidth="4" />
            </LayerPair>
          </Group>
          <VRule />
          <TerminalIcon />
        </TopBar>
        <TopBar $height={72} $gap={0} $pad={10} $lift={0}>
          <Group $gap={5}>
            <Select width={439} text="配線: 0.250 mm (9.84 mils) *" ls={0.12} />
            <Select width={671} text="ビア: 0.80 mm (31.5 mils)/ 0.40 mm (15.7 mils) *" ls={0.24} />
          </Group>
          <Group $gap={16} $left={11}>
            <VRule />
            <TrackWidthIcon />
            <VRule />
          </Group>
          <Group $gap={10} $left={9}>
            <Select width={512} text="グリッド: 0.0254 mm (1.00 mils)" ls={0.1} />
            <VRule />
            <Select width={279} text="自動ズーム" ls={-0.9} />
          </Group>
        </TopBar>
        <Middle>
          <ToolColumn tools={leftTools} />
          <Board>
            <BoardDrawing />
            <Gutter />
            <VTrack>
              <Thumb $w={16} $h={36} />
            </VTrack>
            <HGutter />
            <HTrack>
              <Thumb $w={76} $h={16} />
            </HTrack>
          </Board>
          <ToolColumn tools={rightTools} />
          <Sash>
            <SashGrip />
          </Sash>
          <Panel>
            <PanelTitle>レイヤー マネージャー</PanelTitle>
            <Notebook>
              <TabStrip>
                <Tab $active $width={120}>レイヤー</Tab>
                <Tab $width={125}>アイテム:</Tab>
              </TabStrip>
              <StripEdge />
              <LayerList>
                {layers.map(([name, color], i) => (
                  <LayerRow key={name}>
                    <Marker $on={i === 0} />
                    <Swatch $color={color} />
                    <Check viewBox="0 0 28 28" fill="none">
                      <path d="M7.500 15L12 20.500L20.500 7.500" stroke="#fff" strokeWidth="3.200" strokeLinecap="round" strokeLinejoin="round" />
                    </Check>
                    <LayerName>{name}</LayerName>
                  </LayerRow>
                ))}
              </LayerList>
            </Notebook>
          </Panel>
        </Middle>
        <InfoBar>
          {info.map(([label, value, width, color]) => (
            <InfoCell key={label} $width={width} $color={color}>
              {label}
              <InfoValue>{value}</InfoValue>
            </InfoCell>
          ))}
        </InfoBar>
        <StatusBar>
          {status.map(([text, width]) => (
            <StatusCell key={text} $width={width}>{text}</StatusCell>
          ))}
        </StatusBar>
      </Window>
    </>
  );
}
